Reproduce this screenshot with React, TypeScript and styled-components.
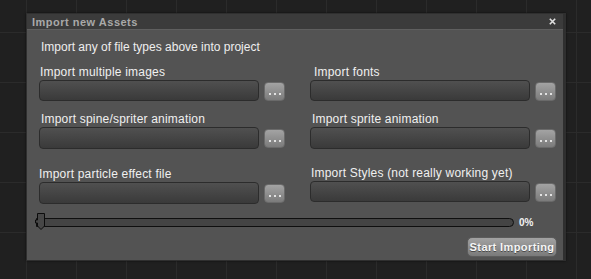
import React from 'react';
import styled, {createGlobalStyle} from 'styled-components';

const GlobalStyle = createGlobalStyle`
  html, body {
    margin: 0;
    padding: 0;
  }
  body {
    width: 591px;
    height: 279px;
    overflow: hidden;
    background-color: #202020;
    background-image:
      linear-gradient(to right, #2b2b2b 1px, transparent 1px),
      linear-gradient(to bottom, #2b2b2b 1px, transparent 1px);
    background-size: 50px 50px;
    background-position: 26px 32px;
    font-family: "Liberation Sans", Arial, sans-serif;
  }
`;

const Screen = styled.div`
  padding-top: 13px;
  padding-left: 26px;
`;

const Dialog = styled.div`
  width: 540px;
  height: 248px;
  box-sizing: border-box;
  display: flex;
  flex-direction: column;
  background: #535353;
  border: 1px solid #2f2f2f;
  border-right-width: 3px;
  box-shadow: 0 0 2px rgba(0, 0, 0, 0.6);
`;

const TitleBar = styled.div`
  height: 15px;
  display: flex;
  align-items: center;
  justify-content: space-between;
  padding: 0 7px 0 5px;
  background: #3b3b3b;
  border-bottom: 1px solid #5f5f5f;
`;

const Title = styled.span`
  font-size: 11px;
  font-weight: bold;
  letter-spacing: 0.5px;
  color: #a9a9a9;
`;

const CloseIcon = styled.svg`
  width: 7px;
  height: 7px;
`;

const Body = styled.div`
  flex: 1;
  display: flex;
  flex-direction: column;
  padding: 10px 6px 0 11px;
`;

const Intro = styled.p`
  margin: 0 0 0 3px;
  font-size: 12px;
  line-height: 14px;
  color: #eeeeee;
`;

const FieldGrid = styled.div`
  display: grid;
  grid-template-columns: 246px 246px;
  column-gap: 25px;
  align-items: start;
  margin-left: 1px;
`;

const Field = styled.div<{$mt: number}>`
  display: flex;
  flex-direction: column;
  margin-top: ${p => p.$mt}px;
`;

const Label = styled.label<{$indent: number}>`
  font-size: 12px;
  line-height: 14px;
  letter-spacing: 0.2px;
  color: #f0f0f0;
  margin-left: ${p => p.$indent}px;
  margin-bottom: 1px;
`;

const InputRow = styled.div`
  display: flex;
  align-items: center;
  gap: 5px;
`;

const PathInput = styled.div<{$h: number}>`
  width: 220px;
  height: ${p => p.$h}px;
  box-sizing: border-box;
  border: 1px solid #2c2c2c;
  border-radius: 4px;
  background: linear-gradient(to bottom, #505050, #3a3a3a);
`;

const BrowseButton = styled.button`
  width: 21px;
  height: 19px;
  margin-top: 1px;
  box-sizing: border-box;
  border: 1px solid #6a6a6a;
  border-radius: 4px;
  background: linear-gradient(to bottom, #a3a3a3, #7b7b7b);
  display: flex;
  align-items: flex-end;
  justify-content: center;
  gap: 3px;
  padding: 0 0 5px 0;
`;

const Dot = styled.span`
  width: 2px;
  height: 2px;
  border-radius: 1px;
  background: #ffffff;
`;

const ProgressRow = styled.div`
  display: flex;
  align-items: center;
  margin-top: 10px;
  margin-left: -2px;
  height: 17px;
`;

const Track = styled.div`
  position: relative;
  width: 478px;
  height: 9px;
  box-sizing: border-box;
  border: 1px solid #0f0f0f;
  border-radius: 0 5px 5px 0;
  background: #444444;
`;

const Knob = styled.svg`
  position: absolute;
  left: -2px;
  top: -6px;
  width: 11px;
  height: 18px;
`;

const Percent = styled.span`
  margin-left: 5px;
  font-size: 10px;
  font-weight: bold;
  color: #f2f2f2;
`;

const Footer = styled.div`
  display: flex;
  justify-content: flex-end;
  margin-top: 6px;
`;

const StartButton = styled.button`
  width: 90px;
  height: 20px;
  padding: 0;
  box-sizing: border-box;
  border: 1px solid #5c5c5c;
  border-radius: 5px;
  background: linear-gradient(to bottom, #a2a2a2, #7a7a7a);
  color: #f6f6f6;
  font-family: "Liberation Sans", Arial, sans-serif;
  font-size: 11px;
  font-weight: bold;
  letter-spacing: 0.4px;
  text-shadow: 0 1px 0 #4a4a4a;
`;

type FieldDef = {label: string; mt: number; indent: number; h: number};

const fields: FieldDef[] = [
  {label: 'Import multiple images', mt: 11, indent: 1, h: 21},
  {label: 'Import fonts', mt: 11, indent: 4, h: 21},
  {label: 'Import spine/spriter animation', mt: 11, indent: 2, h: 22},
  {label: 'Import sprite animation', mt: 11, indent: 2, h: 22},
  {label: 'Import particle effect file', mt: 18, indent: 0, h: 22},
  {label: 'Import Styles (not really working yet)', mt: 17, indent: 1, h: 21},
];

const FileField: React.FC<{def: FieldDef}> = ({def}) => (
  <Field $mt={def.mt}>
    <Label $indent={def.indent}>{def.label}</Label>
    <InputRow>
      <PathInput $h={def.h}/>
      <BrowseButton aria-label="browse">
        <Dot/><Dot/><Dot/>
      </BrowseButton>
    </InputRow>
  </Field>
);

export default function App() {
  return (
    <>
      <GlobalStyle/>
      <Screen>
        <Dialog>
          <TitleBar>
            <Title>Import new Assets</Title>
            <CloseIcon viewBox="0 0 7 7">
              <path d="M0.8 0.8 L6.2 6.2 M6.2 0.8 L0.8 6.2" stroke="#e0e0e0" strokeWidth="1.6"/>
            </CloseIcon>
          </TitleBar>
          <Body>
            <Intro>Import any of file types above into project</Intro>
            <FieldGrid>
              {fields.map(f => <FileField key={f.label} def={f}/>)}
            </FieldGrid>
            <ProgressRow>
              <Track>
                <Knob viewBox="0 0 11 18">
                  <path d="M2.5 0.5 H9.5 V13 L6 16.5 L2.5 13 V10 H0.5 V7 H2.5 Z" fill="#474747" stroke="#0c0c0c" strokeWidth="1"/>
                </Knob>
              </Track>
              <Percent>0%</Percent>
            </ProgressRow>
            <Footer>
              <StartButton>Start Importing</StartButton>
            </Footer>
          </Body>
        </Dialog>
      </Screen>
    </>
  );
}
